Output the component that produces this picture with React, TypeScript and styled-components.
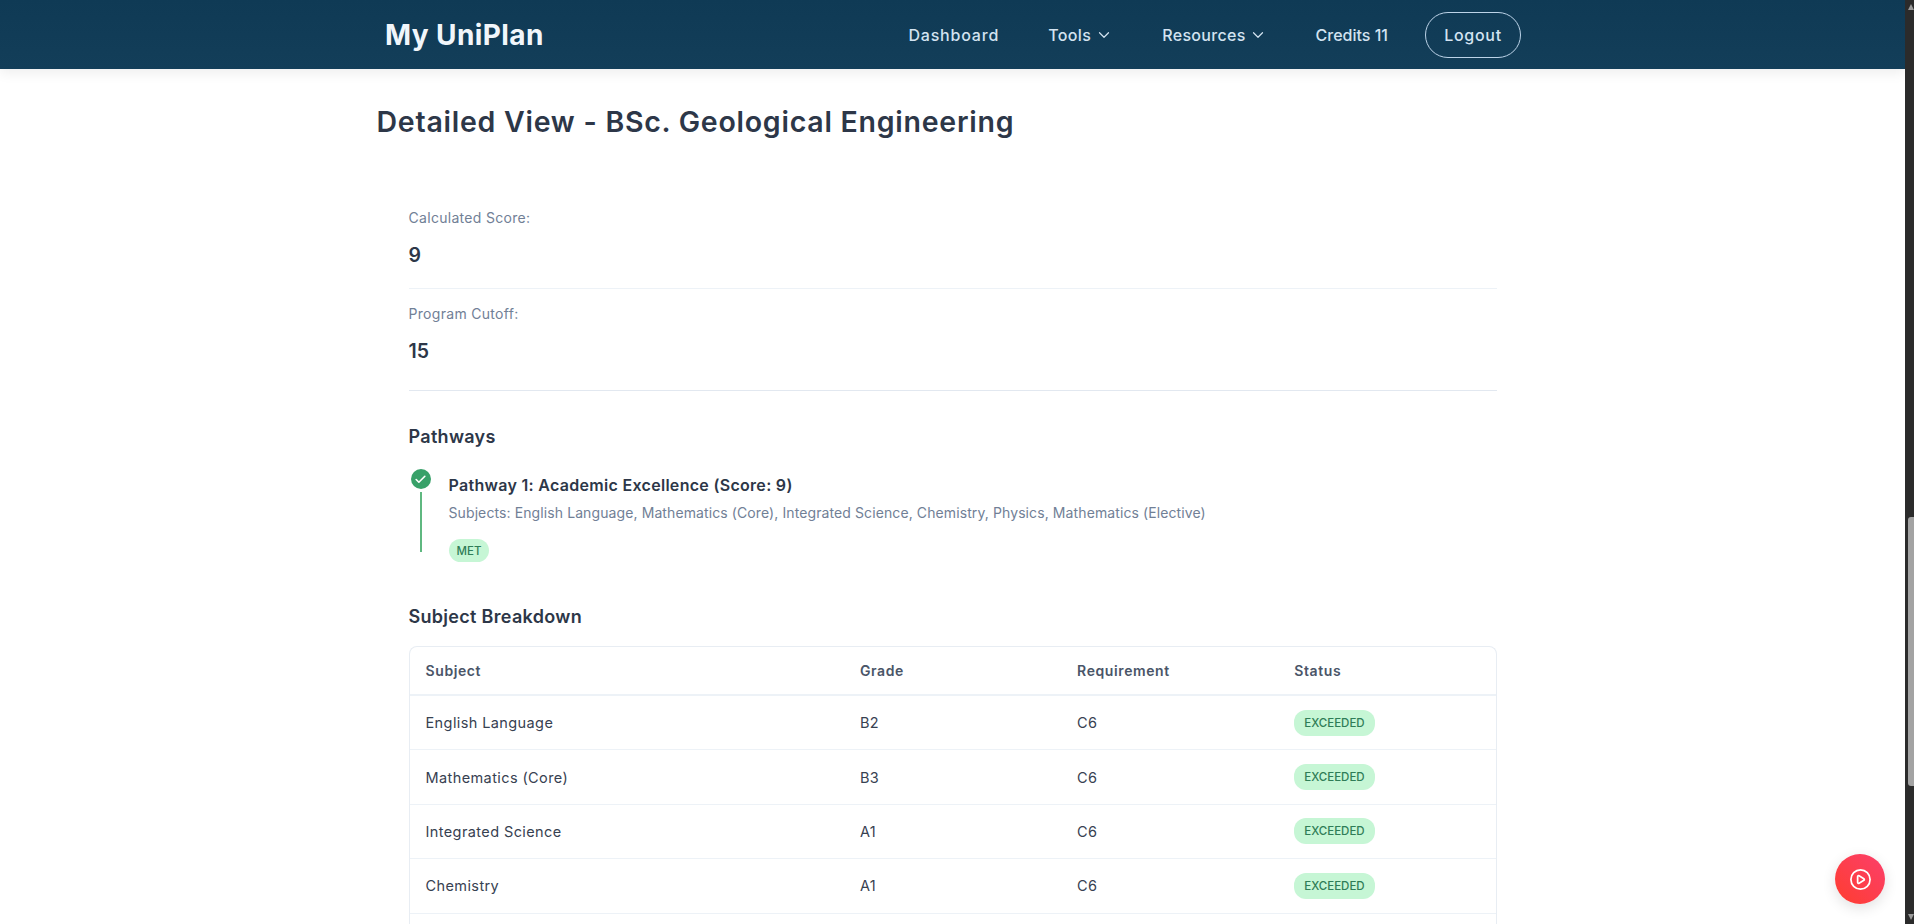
import React from "react"
import styled, { createGlobalStyle } from "styled-components"
import { Check, ChevronDown, CirclePlay } from "lucide-react"

const FONT = `"Inter", "Noto Sans", "Liberation Sans", sans-serif`

const GlobalStyle = createGlobalStyle`
    html, body {
        margin: 0;
        height: 100%;
        overflow: hidden;
        background: #fff;
        font-family: ${FONT};
        color: #2d3748;
    }
    * { box-sizing: border-box; }
`

// right padding keeps the centred content clear of the drawn scrollbar
const Page = styled.div`
    height: 924px;
    padding-right: 9px;
    overflow: hidden;
`

const Header = styled.header`
    height: 69px;
    background: linear-gradient(#0f3a55, #133e59);
    box-shadow: 0 4px 12px rgba(0, 0, 0, 0.07);
    display: flex;
    justify-content: center;
`

const HeaderInner = styled.div`
    width: 1152px;
    padding: 0 7.5px 0 8.5px;
    display: flex;
    align-items: center;
    justify-content: space-between;
`

const Brand = styled.div`
    font-size: 28px;
    font-weight: 700;
    letter-spacing: 0.4px;
    color: #f1f6fb;
`

const Nav = styled.nav`
    display: flex;
    align-items: center;
    gap: 49px;
    color: #d3e3f1;
    font-size: 16px;
    font-weight: 500;
`

const NavItem = styled.span<{ $spacing: number; $gap?: number }>`
    display: inline-flex;
    align-items: center;
    gap: ${({ $gap }) => $gap ?? 4}px;
    white-space: pre;
    letter-spacing: ${({ $spacing }) => $spacing}px;
`

const LogoutButton = styled.button`
    width: 96px;
    height: 46px;
    margin-left: -12px;
    border-radius: 23px;
    border: 1px solid #bcd3e8;
    background: transparent;
    color: #d3e3f1;
    font: 500 16px ${FONT};
    letter-spacing: 0.7px;
`

const Main = styled.main`
    width: 1152px;
    margin: 0 auto;
    padding-top: 34px;
`

const Title = styled.h1`
    margin: 0;
    font-size: 28.5px;
    line-height: 38px;
    font-weight: 600;
    letter-spacing: 0.75px;
    color: #2d3748;
`

const Content = styled.div`
    margin: 67px 32px 0 32px;
`

const ScoreBlock = styled.div<{ $strong?: boolean }>`
    padding-bottom: ${({ $strong }) => ($strong ? "25px" : "19px")};
    margin-bottom: ${({ $strong }) => ($strong ? "33px" : "15px")};
    border-bottom: 1px solid ${({ $strong }) => ($strong ? "#e2e8f0" : "#edf2f7")};
`

const ScoreLabel = styled.div`
    font-size: 14px;
    line-height: 20px;
    letter-spacing: 0.3px;
    color: #718096;
`

const ScoreValue = styled.div`
    margin-top: 13px;
    font-size: 19.5px;
    line-height: 28px;
    font-weight: 600;
    color: #2d3748;
`

const SectionTitle = styled.h2`
    margin: 0;
    font-size: 18px;
    line-height: 26px;
    font-weight: 600;
    letter-spacing: 0.3px;
    color: #2d3748;
`

const PathwayRow = styled.div`
    display: flex;
    gap: 16px;
    margin: 19px 0 42px;
`

const Marker = styled.div`
    width: 24px;
    display: flex;
    flex-direction: column;
    align-items: center;
`

const CheckDot = styled.div`
    width: 20px;
    height: 20px;
    border-radius: 50%;
    background: #38a169;
    color: #fff;
    display: flex;
    align-items: center;
    justify-content: center;
`

const MarkerLine = styled.div`
    width: 2px;
    height: 60px;
    margin-top: 3px;
    background: #5fb880;
`

const PathwayBody = styled.div`
    padding-top: 4px;
`

const PathwayTitle = styled.div`
    font-size: 16px;
    line-height: 24px;
    font-weight: 600;
    letter-spacing: 0.3px;
    color: #2d3748;
`

const PathwaySubjects = styled.div`
    margin-top: 5px;
    font-size: 14px;
    line-height: 22px;
    letter-spacing: 0.1px;
    color: #718096;
`

const Badge = styled.span`
    display: inline-flex;
    align-items: center;
    height: 26px;
    padding: 0 10px;
    border-radius: 12px;
    background: #c6f6d5;
    color: #2f7d57;
    font-size: 11.5px;
    font-weight: 500;
`

const MetBadge = styled(Badge)`
    height: 23px;
    margin-top: 15px;
    padding: 0 8px;
`

// bottom padding stands for the rest of the table, which runs past the fold
const TableFrame = styled.div`
    margin-top: 16px;
    padding-bottom: 54px;
    border: 1px solid #e8edf3;
    border-bottom: 0;
    border-radius: 8px 8px 0 0;
`

const Row = styled.div<{ $head?: boolean }>`
    display: grid;
    grid-template-columns: 40% 20% 20% 20%;
    align-items: center;
    height: ${({ $head }) => ($head ? "49px" : "54.4px")};
    border-bottom: ${({ $head }) => ($head ? "2px solid #edf2f7" : "1px solid #edf2f7")};
    color: ${({ $head }) => ($head ? "#4a5568" : "#374151")};
    font-size: ${({ $head }) => ($head ? "14px" : "14.5px")};
    font-weight: ${({ $head }) => ($head ? 600 : 400)};
    letter-spacing: ${({ $head }) => ($head ? "0.6px" : "0.4px")};
`

const Cell = styled.div`
    padding-left: 16px;
`

const StatusBadge = styled(Badge)`
    letter-spacing: 0;
`

const Fab = styled.button`
    position: fixed;
    right: 29px;
    bottom: 20px;
    width: 50px;
    height: 50px;
    padding: 0;
    border: 0;
    border-radius: 50%;
    background: linear-gradient(45deg, #ff3d2e, #fb3f6c);
    box-shadow: 0 4px 14px rgba(0, 0, 0, 0.12);
    color: #fff;
    display: flex;
    align-items: center;
    justify-content: center;
`

const ScrollTrack = styled.div`
    position: fixed;
    top: 0;
    right: 0;
    bottom: 0;
    width: 9px;
    background: #2b2b2b;
`

const ScrollThumb = styled.div`
    position: absolute;
    left: 3px;
    right: 0;
    top: 517px;
    height: 269px;
    border-radius: 3px 0 0 3px;
    background: #a3a3a3;
`

const ScrollArrow = styled.div<{ $down?: boolean }>`
    position: absolute;
    left: 3px;
    ${({ $down }) => ($down ? "bottom: 4px;" : "top: 4px;")}
    width: 0;
    height: 0;
    border-left: 3px solid transparent;
    border-right: 3px solid transparent;
    ${({ $down }) => ($down ? "border-top: 6px solid #9a9a9a;" : "border-bottom: 6px solid #9a9a9a;")}
`

const subjects = [
    { name: "English Language", grade: "B2", requirement: "C6" },
    { name: "Mathematics (Core)", grade: "B3", requirement: "C6" },
    { name: "Integrated Science", grade: "A1", requirement: "C6" },
    { name: "Chemistry", grade: "A1", requirement: "C6" },
]

const App = () => (
    <Page>
        <GlobalStyle />
        <Header>
            <HeaderInner>
                <Brand>My UniPlan</Brand>
                <Nav>
                    <NavItem $spacing={0.8}>Dashboard</NavItem>
                    <NavItem $spacing={0.4}>Tools<ChevronDown size={18} strokeWidth={1.6} /></NavItem>
                    <NavItem $spacing={0.3} $gap={3}>Resources<ChevronDown size={18} strokeWidth={1.6} /></NavItem>
                    <NavItem $spacing={0}>Credits 11</NavItem>
                    <LogoutButton>Logout</LogoutButton>
                </Nav>
            </HeaderInner>
        </Header>
        <Main>
            <Title>Detailed View - BSc. Geological Engineering</Title>
            <Content>
                <ScoreBlock>
                    <ScoreLabel>Calculated Score:</ScoreLabel>
                    <ScoreValue>9</ScoreValue>
                </ScoreBlock>
                <ScoreBlock $strong>
                    <ScoreLabel>Program Cutoff:</ScoreLabel>
                    <ScoreValue>15</ScoreValue>
                </ScoreBlock>
                <SectionTitle>Pathways</SectionTitle>
                <PathwayRow>
                    <Marker>
                        <CheckDot><Check size={13} strokeWidth={3} /></CheckDot>
                        <MarkerLine />
                    </Marker>
                    <PathwayBody>
                        <PathwayTitle>Pathway 1: Academic Excellence (Score: 9)</PathwayTitle>
                        <PathwaySubjects>
                            Subjects: English Language, Mathematics (Core), Integrated Science, Chemistry, Physics, Mathematics (Elective)
                        </PathwaySubjects>
                        <MetBadge>MET</MetBadge>
                    </PathwayBody>
                </PathwayRow>
                <SectionTitle>Subject Breakdown</SectionTitle>
                <TableFrame>
                    <Row $head>
                        <Cell>Subject</Cell>
                        <Cell>Grade</Cell>
                        <Cell>Requirement</Cell>
                        <Cell>Status</Cell>
                    </Row>
                    {subjects.map(({ name, grade, requirement }) => (
                        <Row key={name}>
                            <Cell>{name}</Cell>
                            <Cell>{grade}</Cell>
                            <Cell>{requirement}</Cell>
                            <Cell><StatusBadge>EXCEEDED</StatusBadge></Cell>
                        </Row>
                    ))}
                </TableFrame>
            </Content>
        </Main>
        <Fab><CirclePlay size={23} strokeWidth={1.8} /></Fab>
        <ScrollTrack>
            <ScrollArrow />
            <ScrollThumb />
            <ScrollArrow $down />
        </ScrollTrack>
    </Page>
)

export default App
